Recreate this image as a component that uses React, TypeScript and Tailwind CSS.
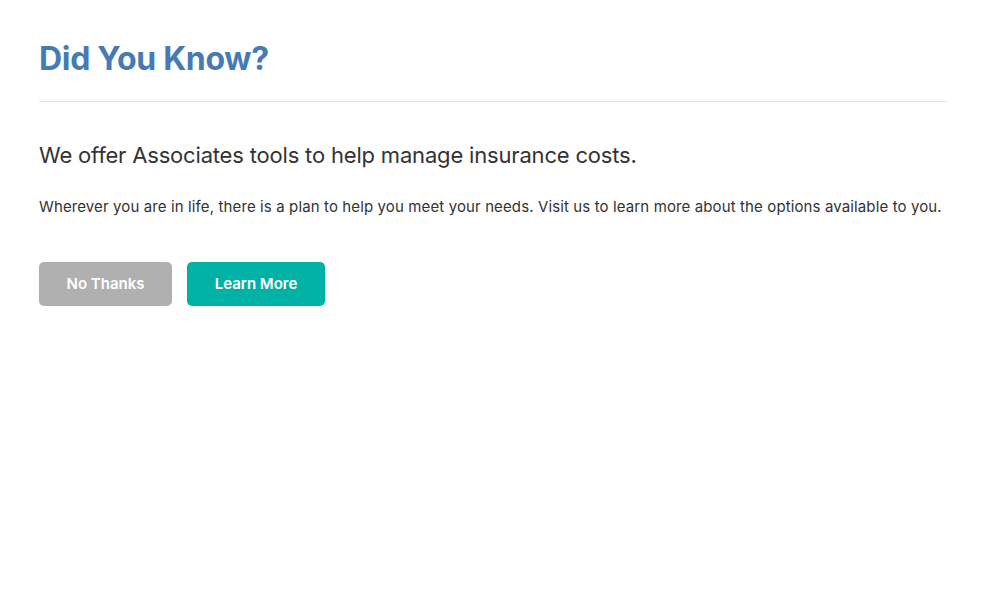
export default function App() {
  return (
    <div className="min-h-[600px] w-[988px] bg-white px-[39px] pt-[39px]" style={{ fontFamily: "Inter, 'Helvetica Neue', Arial, sans-serif" }}>
      <h1 className="text-[32px] font-bold leading-[40px] tracking-[-0.3px] text-[#457bb5]">Did You Know?</h1>
      <div className="mt-[22px] h-px w-[909px] bg-[#e5e5e5]" />
      <h2 className="mt-[39px] text-[22px] leading-[28px] text-[#333] tracking-[-0.18px]">We offer Associates tools to help manage insurance costs.</h2>
      <p className="mt-[27px] text-[15px] leading-[22px] text-[#333] tracking-[0.12px]">Wherever you are in life, there is a plan to help you meet your needs. Visit us to learn more about the options available to you.</p>
      <div className="mt-[44px] flex gap-[15px]">
        <button className="h-[44px] w-[133px] rounded-[5px] bg-[#b0b0b0] text-[15px] font-semibold text-white">No Thanks</button>
        <button className="h-[44px] w-[138px] rounded-[5px] bg-[#00b2a5] text-[15px] font-semibold text-white">Learn More</button>
      </div>
    </div>
  );
}
